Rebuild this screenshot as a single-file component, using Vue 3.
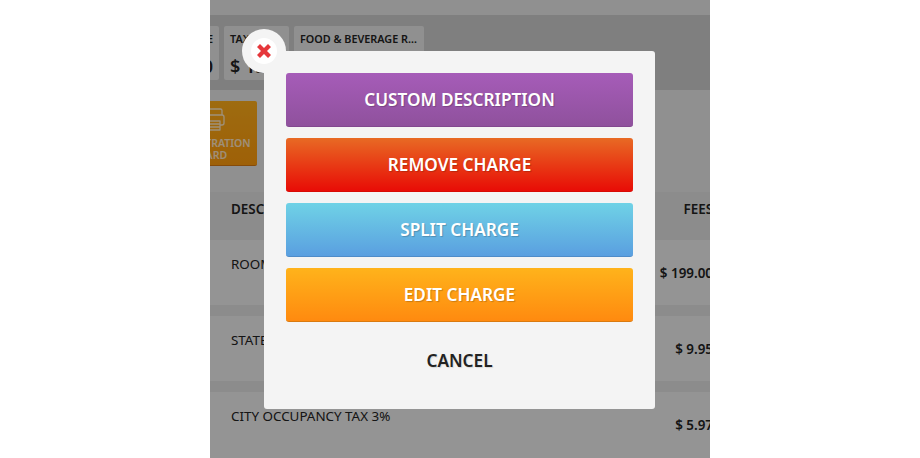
<script setup>
const tiles = [
  { label: 'ROOM RATE', value: '$ 199.00', width: '90px', last: true },
  { label: 'TAXES', value: '$ 15.92', width: '65px' },
  { label: 'FOOD & BEVERAGE R…', value: '', width: '130px' }
]

const charges = [
  { name: 'ROOM RATE', fee: '$ 199.00' },
  { name: 'STATE TAX', fee: '$ 9.95' },
  { name: 'CITY OCCUPANCY TAX 3%', fee: '$ 5.97' }
]

const actions = [
  { label: 'CUSTOM DESCRIPTION', type: 'purple' },
  { label: 'REMOVE CHARGE', type: 'red' },
  { label: 'SPLIT CHARGE', type: 'blue' },
  { label: 'EDIT CHARGE', type: 'orange' }
]
</script>

<template>
  <div class="page">
    <section class="screen">
      <div class="topbar"></div>
      <div class="tiles">
        <div
          v-for="tile in tiles"
          :key="tile.label"
          class="tile"
          :class="{ right: tile.last }"
          :style="{ width: tile.width }"
        >
          <span class="tile-label">{{ tile.label }}</span>
          <span class="tile-value">{{ tile.value }}</span>
        </div>
      </div>

      <div class="toolbar">
        <div class="reg-card">
          <svg class="printer" width="24" height="23" viewBox="0 0 24 23" fill="none" stroke="#fff" stroke-width="1.3" stroke-linejoin="round">
            <path d="M5 7V2.500A1.500 1.500 0 0 1 6.500 1H19.500A1.500 1.500 0 0 1 21 2.500V7" />
            <path d="M5 17H3A2 2 0 0 1 1 15V9A2 2 0 0 1 3 7H21A2 2 0 0 1 23 9V15A2 2 0 0 1 21 17H19" />
            <path d="M5 13H19V22H5Z" />
            <path d="M5 16H19M5 19H19" />
          </svg>
          <span>REGISTRATION<br />CARD</span>
        </div>
      </div>

      <div class="table-head">
        <span>DESCRIPTION</span>
        <span class="fee-head">FEES</span>
      </div>
      <div class="rows">
        <div v-for="charge in charges" :key="charge.name" class="row">
          <span class="row-name">{{ charge.name }}</span>
          <span class="row-fee">{{ charge.fee }}</span>
        </div>
      </div>

      <div class="overlay"></div>

      <div class="modal">
        <button class="close" type="button">
          <svg width="16" height="16" viewBox="0 0 16 16">
            <path d="M1 4l3-3 4 4 4-4 3 3-4 4 4 4-3 3-4-4-4 4-3-3 4-4z" fill="#e5373b" />
          </svg>
        </button>
        <button v-for="action in actions" :key="action.label" class="action" :class="action.type" type="button">
          {{ action.label }}
        </button>
        <button class="cancel" type="button">CANCEL</button>
      </div>
    </section>
  </div>
</template>

<style>
html,
body {
  margin: 0;
  background: #fff;
}
</style>

<style scoped>
.page {
  width: 920px;
  height: 458px;
  display: flex;
  justify-content: center;
  background: #fff;
  font-family: "Noto Sans", "Open Sans", sans-serif;
}

.screen {
  position: relative;
  width: 500px;
  height: 458px;
  overflow: hidden;
  display: flex;
  flex-direction: column;
  background: #f2f2f2;
  color: #222;
}

.topbar {
  flex: none;
  height: 15px;
  background: #e8e8e8;
}

.tiles {
  flex: none;
  height: 75px;
  box-sizing: border-box;
  padding-top: 11px;
  display: flex;
  gap: 5px;
  margin-left: -81px;
  background: #cdcdcd;
}

.tile {
  flex: none;
  height: 54px;
  box-sizing: border-box;
  padding: 5px 6px 0;
  display: flex;
  flex-direction: column;
  gap: 8px;
  background: #e8e8e8;
  border-radius: 2px;
}

.tile.right {
  align-items: flex-end;
}

.tile-label {
  font-size: 10.800px;
  font-weight: 600;
  white-space: nowrap;
}

.tile-value {
  font-size: 18px;
  font-weight: 600;
  white-space: nowrap;
}

.toolbar {
  flex: none;
  height: 102px;
  padding-top: 11px;
  box-sizing: border-box;
  margin-left: -41px;
  background: #e8e8e8;
}

.reg-card {
  width: 88px;
  height: 65px;
  box-sizing: border-box;
  display: flex;
  flex-direction: column;
  align-items: center;
  padding-top: 7px;
  background: linear-gradient(#ffae1a, #ff9c0d);
  border-bottom: 1px solid #d87a10;
  border-radius: 2px;
  color: #fff;
  font-size: 10.500px;
  font-weight: 600;
  line-height: 12px;
  text-align: center;
}

.printer {
  flex: none;
  margin-bottom: 6px;
  opacity: 0.75;
}

.reg-card span {
  opacity: 0.75;
}

.table-head {
  flex: none;
  height: 48px;
  box-sizing: border-box;
  padding: 8px 0 0 21px;
  display: flex;
  justify-content: space-between;
  font-size: 13.400px;
  font-weight: 600;
  background: #e3e3e3;
}

.fee-head {
  margin-right: -3px;
}

.rows {
  flex: 1;
  display: flex;
  flex-direction: column;
  gap: 11px;
  background: #e3e3e3;
}

.row {
  flex: none;
  height: 65px;
  box-sizing: border-box;
  padding: 15px 0 0 21px;
  display: flex;
  justify-content: space-between;
  background: #efefef;
  font-size: 13.400px;
}

.row:last-child {
  flex: 1;
}

.row-fee {
  margin: 9px -3px 0 0;
  font-weight: 600;
}

.overlay {
  position: absolute;
  inset: 0;
  background: rgba(0, 0, 0, 0.38);
}

.modal {
  position: absolute;
  left: 54px;
  top: 51px;
  width: 391px;
  height: 358px;
  box-sizing: border-box;
  padding: 22px;
  display: flex;
  flex-direction: column;
  gap: 11px;
  background: #f4f4f4;
  border-radius: 3px;
}

.close {
  position: absolute;
  left: -22px;
  top: -22px;
  width: 44px;
  height: 44px;
  padding: 0;
  border: 0;
  border-radius: 50%;
  display: flex;
  align-items: center;
  justify-content: center;
  background: #f4f4f4;
}

.close::before {
  content: "";
  position: absolute;
  inset: 9px;
  border-radius: 50%;
  background: #fff;
}

.close svg {
  position: relative;
}

.action {
  flex: none;
  height: 54px;
  padding: 0;
  border: 0;
  border-radius: 3px;
  color: #fff;
  font-family: inherit;
  font-size: 17.200px;
  font-weight: 600;
  text-shadow: 1px 1px 1px rgba(0, 0, 0, 0.2);
}

.purple {
  background: linear-gradient(#a65cb8, #8f519d);
  border-bottom: 1px solid #82488f;
}

.red {
  background: linear-gradient(#e86a24, #e80c06);
  border-bottom: 1px solid #d80b05;
}

.blue {
  background: linear-gradient(#6fd2e6, #5a9fe0);
  border-bottom: 1px solid #4f8cc8;
}

.orange {
  background: linear-gradient(#ffb31b, #ff8a0f);
  border-bottom: 1px solid #d97a10;
}

.cancel {
  flex: none;
  height: 54px;
  padding: 0;
  border: 0;
  background: none;
  color: #222;
  font-family: inherit;
  font-size: 17.200px;
  font-weight: 600;
  text-shadow: 1px 1px 1px rgba(0, 0, 0, 0.12);
}
</style>
